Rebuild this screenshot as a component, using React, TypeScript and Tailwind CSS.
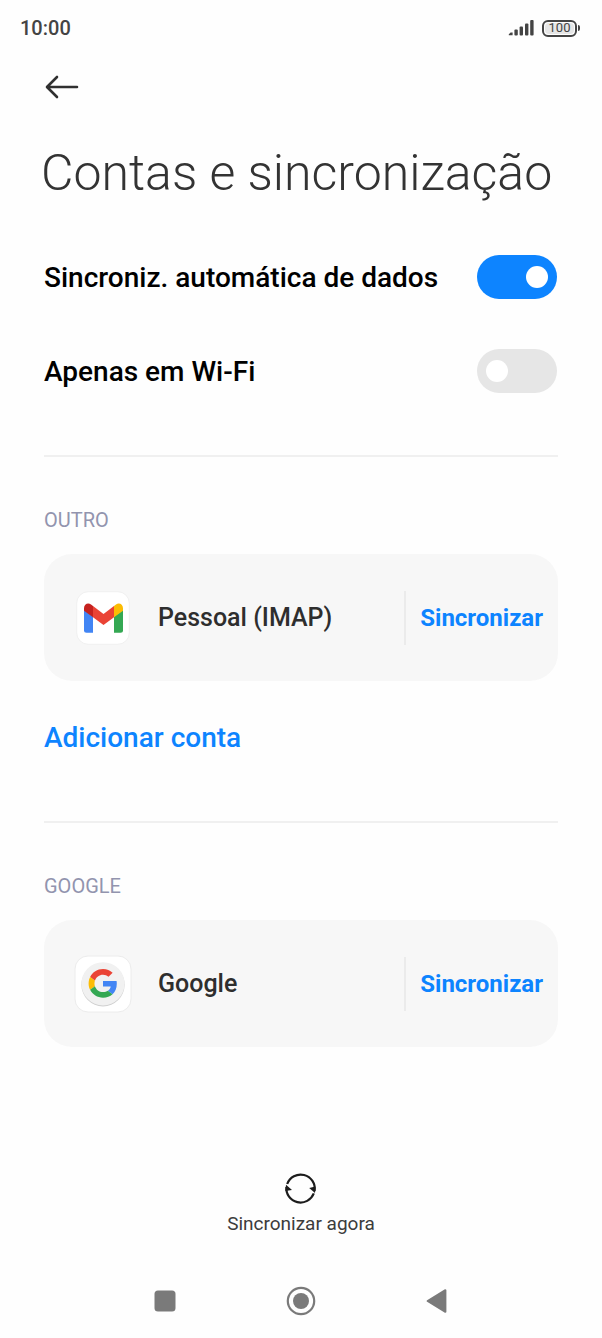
import { useState, type ReactNode } from "react";

function StatusBar() {
  return (
    <div className="flex h-14 items-center justify-between pl-5 pr-[22px] text-[#444444]">
      <time className="text-xl font-medium leading-6">10:00</time>
      <div className="flex items-center gap-[7px]">
        <svg width="27" height="18" viewBox="0 0 27 18" fill="#444444" aria-hidden="true">
          <path d="M0.8 16.2 V15.2 L2.6 13.4 H4.6 V16.2 Z" />
          <rect x="6.4" y="10.6" width="3.4" height="5.8" rx="1" />
          <rect x="11.6" y="7.6" width="3.4" height="8.8" rx="1" />
          <rect x="17" y="4.6" width="3.4" height="11.8" rx="1" />
          <rect x="22.2" y="1" width="3.4" height="15.4" rx="1" />
        </svg>
        <div className="flex items-center gap-px">
          <div className="flex h-[17px] w-[35px] rounded-md border-2 border-[#444444] p-px">
            <div className="flex flex-1 items-center justify-center rounded-sm bg-[#e6e6e6] text-[13px] leading-3">100</div>
          </div>
          <div className="h-[6px] w-[2px] rounded-r-sm bg-[#444444]" />
        </div>
      </div>
    </div>
  );
}

function Toggle({ id, label, initial }: { id: string; label: string; initial: boolean }) {
  const [on, setOn] = useState(initial);
  return (
    <div className="flex h-[94px] items-center justify-between pr-px">
      <label htmlFor={id} className="pt-[2px] text-[28px] font-medium leading-8 text-black">
        {label}
      </label>
      <input
        id={id}
        type="checkbox"
        checked={on}
        onChange={(e) => setOn(e.target.checked)}
        className="flex h-11 w-20 shrink-0 cursor-pointer appearance-none items-center rounded-full bg-[#e6e6e6] px-[9px] before:block before:size-[22px] before:rounded-full before:bg-white checked:justify-end checked:bg-[#0d84ff]"
      />
    </div>
  );
}

function AccountGroup({ title, name, icon }: { title: string; name: string; icon: ReactNode }) {
  return (
    <section className="border-t-2 border-[#f0f0f0] pt-[51px]">
      <h2 className="text-xl leading-6 text-[#9294ae]">{title}</h2>
      <div className="mt-[22px] flex h-[127px] items-center rounded-[28px] bg-[#f7f7f7] pl-[30px] pr-[15px]">
        <span className="flex size-[58px] shrink-0 items-center justify-center">{icon}</span>
        <span className="ml-[26px] flex-1 pt-px text-[25px] font-medium leading-8 text-[#2e2e2e]">{name}</span>
        <div className="flex h-[54px] items-center border-l-2 border-[#ebebeb] pl-[14px]">
          <button type="button" className="cursor-pointer pt-px text-2xl font-bold leading-8 text-[#0d84ff]">
            Sincronizar
          </button>
        </div>
      </div>
    </section>
  );
}

function GmailIcon() {
  return (
    <svg width="58" height="58" viewBox="0 0 58 58" aria-hidden="true">
      <rect x="2.7" y="2.7" width="52.6" height="52.6" rx="11.5" fill="#fff" stroke="#f0f0f0" />
      <path d="M10 21 L19 27.5 V43.7 H12.5 Q10 43.7 10 41.2 Z" fill="#4285f4" />
      <path d="M40 27.5 L49 21 V41.2 Q49 43.7 46.5 43.7 H40 Z" fill="#34a853" />
      <path d="M19 17 L29.5 25 L40 17 V28.3 L29.5 36 L19 28.3 Z" fill="#ea4335" />
      <path d="M19 28.3 L10 21.8 V19.2 C10 15 14.2 13 17 15.5 L19 17 Z" fill="#c5221f" />
      <path d="M40 28.3 L49 21.8 V19.2 C49 15 44.8 13 42 15.5 L40 17 Z" fill="#fbbc04" />
    </svg>
  );
}

function GoogleIcon() {
  return (
    <svg width="58" height="58" viewBox="0 0 58 58" aria-hidden="true">
      <rect x="1" y="1" width="56" height="56" rx="13" fill="#fff" stroke="#ececec" />
      <circle cx="29" cy="29.8" r="21.6" fill="#cfcfcf" />
      <circle cx="29" cy="28.8" r="21.6" fill="#f1f1f1" />
      <g transform="translate(14.6 14) scale(0.6)">
        <path
          fill="#ea4335"
          d="M24 9.5c3.54 0 6.71 1.22 9.21 3.6l6.85-6.85C35.9 2.38 30.47 0 24 0 14.62 0 6.51 5.38 2.56 13.22l7.98 6.19C12.43 13.72 17.74 9.5 24 9.5z"
        />
        <path
          fill="#4285f4"
          d="M46.98 24.55c0-1.57-.15-3.09-.38-4.55H24v9.02h12.94c-.58 2.96-2.26 5.48-4.78 7.18l7.73 6c4.51-4.18 7.09-10.36 7.09-17.65z"
        />
        <path
          fill="#fbbc05"
          d="M10.53 28.59c-.48-1.45-.76-2.99-.76-4.59s.27-3.14.76-4.59l-7.98-6.19C.92 16.46 0 20.12 0 24c0 3.88.92 7.54 2.56 10.78l7.97-6.19z"
        />
        <path
          fill="#34a853"
          d="M24 48c6.48 0 11.93-2.13 15.89-5.81l-7.73-6c-2.15 1.45-4.92 2.3-8.16 2.3-6.26 0-11.57-4.22-13.47-9.91l-7.98 6.19C6.51 42.62 14.62 48 24 48z"
        />
      </g>
    </svg>
  );
}

function SyncIcon() {
  return (
    <svg width="34" height="34" viewBox="0 0 34 34" fill="none" stroke="#1c1c1c" strokeWidth="2.2" aria-hidden="true">
      <path d="M3.2 12 A14.2 14.2 0 0 1 30.6 19" />
      <path d="M29.8 21.4 A14.2 14.2 0 0 1 2.4 15" />
      <path d="M31 21 L25.2 16 L31.4 14.6 Z" fill="#1c1c1c" stroke="none" />
      <path d="M2 12.8 L8 18 L1.4 19 Z" fill="#1c1c1c" stroke="none" />
    </svg>
  );
}

function NavBar() {
  return (
    <nav aria-label="Sistema" className="flex h-[74px] items-center justify-center gap-[92px]">
      <button type="button" aria-label="Recentes" className="flex size-11 items-center justify-center">
        <svg width="22" height="22" viewBox="0 0 22 22" fill="#7a7a7a">
          <rect x="0.5" y="0.5" width="21" height="21" rx="3.5" />
        </svg>
      </button>
      <button type="button" aria-label="Início" className="flex size-11 items-center justify-center">
        <svg width="30" height="30" viewBox="0 0 30 30">
          <circle cx="15" cy="15" r="13.2" fill="none" stroke="#7a7a7a" strokeWidth="2.2" />
          <circle cx="15" cy="15" r="8" fill="#7a7a7a" />
        </svg>
      </button>
      <button type="button" aria-label="Voltar" className="flex size-11 items-center justify-center">
        <svg width="22" height="26" viewBox="0 0 22 26" fill="#7a7a7a" stroke="#7a7a7a" strokeWidth="2" strokeLinejoin="round">
          <path d="M1.6 13 L19.4 2.2 V23.8 Z" />
        </svg>
      </button>
    </nav>
  );
}

export default function App() {
  return (
    <div className="flex min-h-screen flex-col bg-[#fefefe] font-['Roboto',sans-serif]">
      <StatusBar />
      <main className="px-11">
        <button type="button" aria-label="Voltar" className="flex h-[62px] items-center">
          <svg
            width="36"
            height="24"
            viewBox="0 0 36 24"
            fill="none"
            stroke="#303030"
            strokeWidth="2.6"
            strokeLinecap="round"
            strokeLinejoin="round"
          >
            <path d="M33 12 H3.5 M13 2 L3 12 L13 22" />
          </svg>
        </button>
        <h1 className="-ml-[3px] mt-[25px] text-[50px] font-light leading-[60px] text-[#333333]">Contas e sincronização</h1>
        <div className="pb-[37px] pt-[27px]">
          <Toggle id="auto-sync" label="Sincroniz. automática de dados" initial={true} />
          <Toggle id="wifi-only" label="Apenas em Wi-Fi" initial={false} />
        </div>
        <AccountGroup title="OUTRO" name="Pessoal (IMAP)" icon={<GmailIcon />} />
        <button type="button" className="mb-[67px] mt-[41px] block cursor-pointer text-[28px] font-medium leading-8 text-[#0d84ff]">
          Adicionar conta
        </button>
        <AccountGroup title="GOOGLE" name="Google" icon={<GoogleIcon />} />
      </main>
      <footer className="mt-auto">
        <div className="flex justify-center pb-7">
          <button type="button" className="flex cursor-pointer flex-col items-center gap-[6px] text-[19px] leading-6 text-[#3c3c3c]">
            <SyncIcon />
            Sincronizar agora
          </button>
        </div>
        <NavBar />
      </footer>
    </div>
  );
}
